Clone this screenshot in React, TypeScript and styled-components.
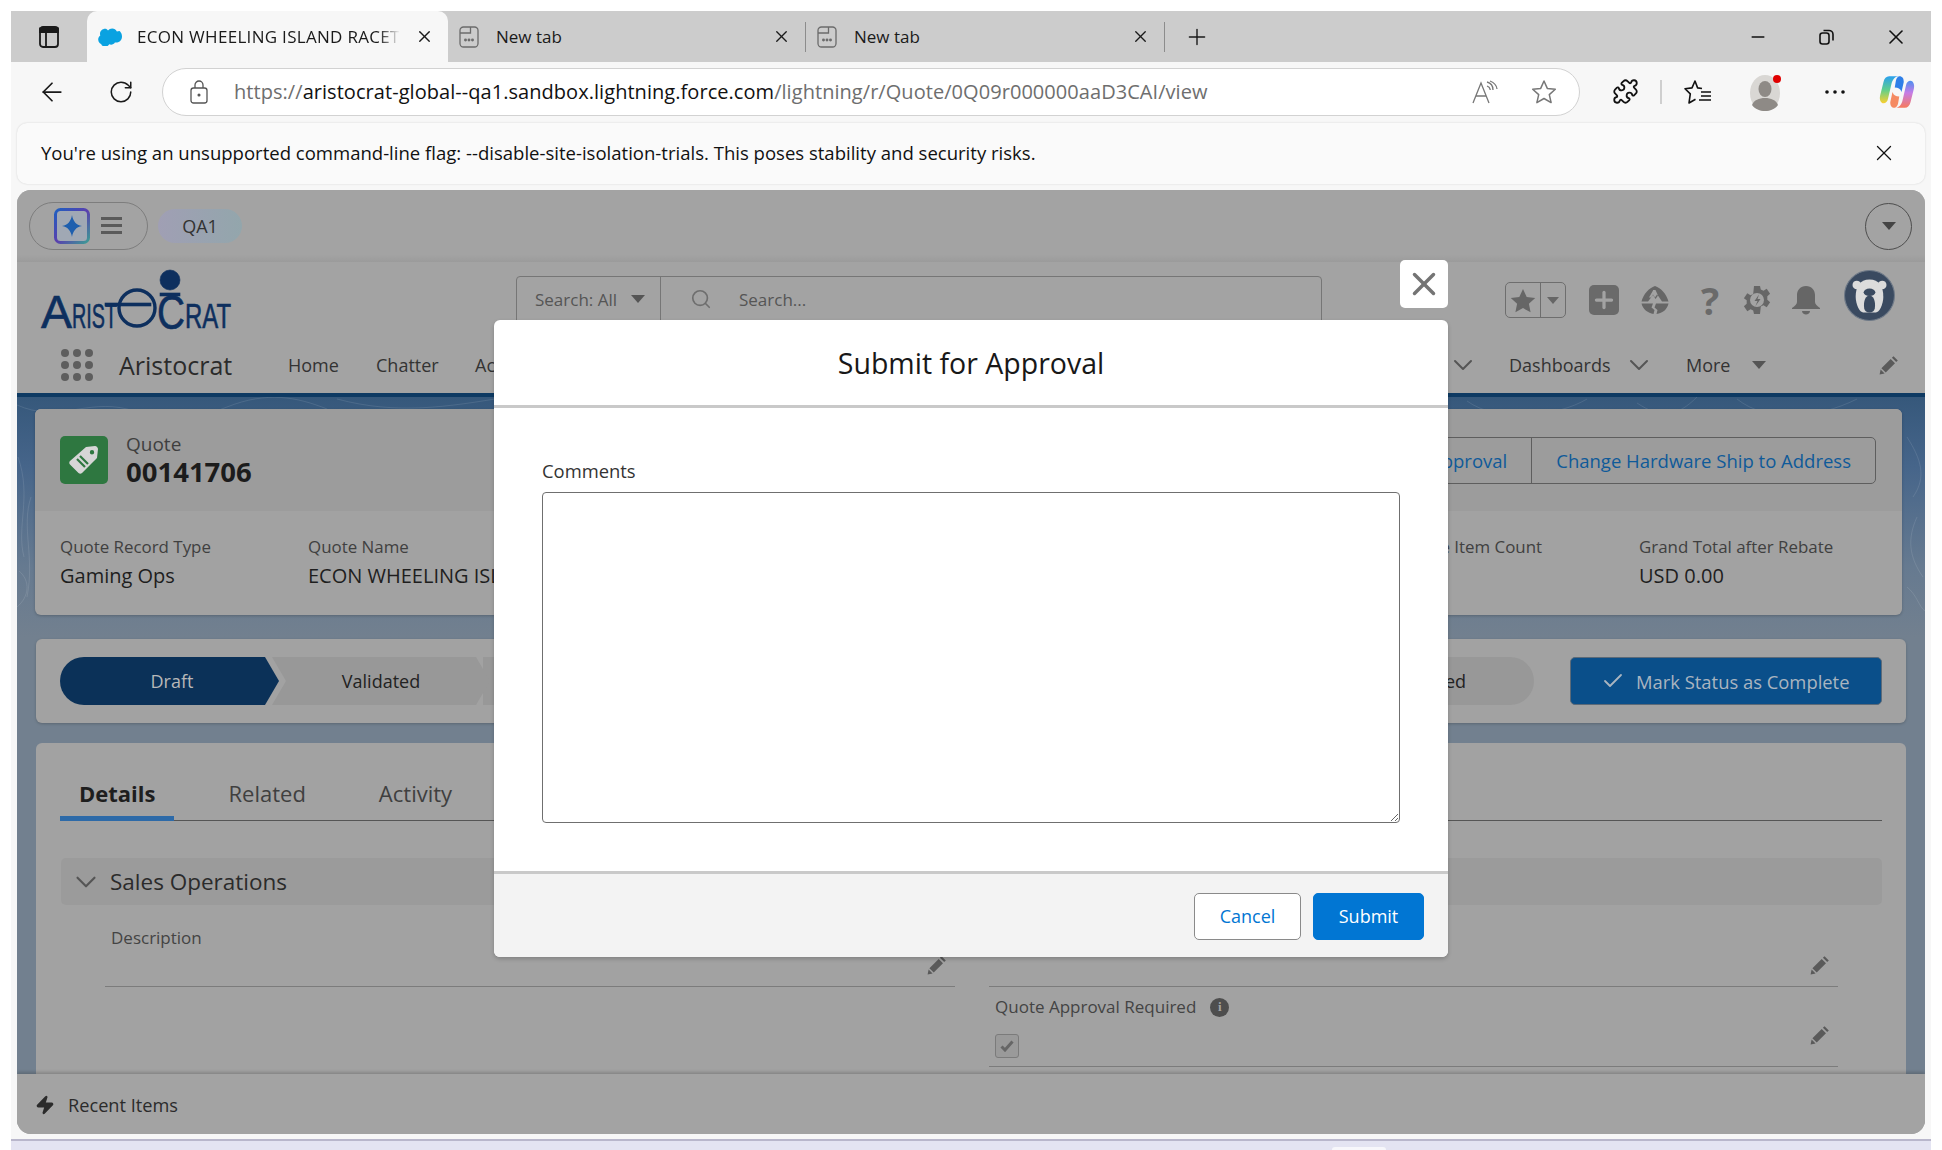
import React from 'react';
import styled, { createGlobalStyle } from 'styled-components';
import { X, Plus, ArrowLeft, RotateCw, Minus, Search, ChevronDown, Check, Zap, Puzzle } from 'lucide-react';

const Global = createGlobalStyle`
  html, body { margin: 0; padding: 0; background: #fff; }
  body { font-family: 'Open Sans', 'Noto Sans', sans-serif; width: 1942px; height: 1150px; overflow: hidden; }
  * { box-sizing: border-box; }
`;

const Screen = styled.div`
  width: 1942px;
  height: 1150px;
  padding: 11px 11px 0;
  display: flex;
  flex-direction: column;
  background: #fff;
`;
const BrowserWindow = styled.div`
  height: 1128px;
  background: #f7f7f7;
  display: flex;
  flex-direction: column;
`;
const TabStrip = styled.div`
  height: 51px;
  background: #cccccc;
  display: flex;
  align-items: center;
  flex-shrink: 0;
`;
const SideIcon = styled.div`
  width: 76px;
  display: flex;
  justify-content: center;
`;
const ActiveTab = styled.div`
  width: 361px;
  height: 51px;
  background: #f7f7f7;
  border-radius: 10px 10px 0 0;
  display: flex;
  align-items: center;
  padding: 0 14px 0 11px;
  gap: 15px;
  flex-shrink: 0;
`;
const TabTitle = styled.span`
  flex: 1;
  font-size: 17px;
  letter-spacing: 0.3px;
  color: #1a1a1a;
  white-space: nowrap;
  overflow: hidden;
  -webkit-mask-image: linear-gradient(90deg, #000 92%, transparent 100%);
  mask-image: linear-gradient(90deg, #000 92%, transparent 100%);
`;
const InactiveTab = styled.div<{ $w: number }>`
  width: ${(p) => p.$w}px;
  height: 51px;
  display: flex;
  align-items: center;
  gap: 17px;
  padding: 0 14px 0 11px;
  flex-shrink: 0;
  font-size: 17px;
  color: #1a1a1a;
`;
const TabLabel = styled.span`
  flex: 1;
`;
const TabDivider = styled.div`
  width: 1px;
  height: 30px;
  background: #8c8c8c;
  flex-shrink: 0;
`;
const NewTabButton = styled.div`
  width: 63px;
  display: flex;
  justify-content: center;
`;
const WindowControls = styled.div`
  margin-left: auto;
  display: flex;
  align-items: center;
  padding-right: 1px;
`;
const WindowControl = styled.div`
  width: 69px;
  display: flex;
  justify-content: center;
`;
const Toolbar = styled.div`
  height: 60px;
  flex-shrink: 0;
  display: flex;
  align-items: center;
  padding-bottom: 1px;
`;
const ToolButton = styled.div<{ $w: number; $ml?: number }>`
  width: ${(p) => p.$w}px;
  margin-left: ${(p) => p.$ml ?? 0}px;
  display: flex;
  justify-content: center;
  align-items: center;
  flex-shrink: 0;
`;
const AddressBar = styled.div`
  width: 1418px;
  height: 48px;
  background: #fff;
  border: 1.5px solid #d2d2d2;
  border-radius: 24px;
  display: flex;
  align-items: center;
  padding: 0 6px 0 26px;
  flex-shrink: 0;
`;
const Url = styled.div`
  margin-left: 25px;
  font-size: 20px;
  letter-spacing: 0.05px;
  color: #6e6e6e;
  white-space: nowrap;
  flex: 1;
`;
const UrlHost = styled.span`
  color: #111;
`;
const ToolSeparator = styled.div`
  width: 1.5px;
  height: 24px;
  background: #cfcfcf;
  flex-shrink: 0;
`;
const InfoBar = styled.div`
  height: 61px;
  margin: 1px 6px 0;
  background: #fafafa;
  border-radius: 10px;
  box-shadow: 0 0 2px rgba(0, 0, 0, 0.16);
  display: flex;
  align-items: center;
  justify-content: space-between;
  padding: 0 28px 2px 24px;
  font-size: 18.55px;
  color: #111;
  flex-shrink: 0;
`;
const Page = styled.div`
  position: relative;
  height: 944px;
  margin: 6px 6px 0;
  border-radius: 14px;
  overflow: hidden;
  background: #a3a3a3;
  display: flex;
  flex-direction: column;
  flex-shrink: 0;
`;
const TopBand = styled.div`
  height: 72px;
  flex-shrink: 0;
  display: flex;
  align-items: center;
  padding: 0 13px 0 12px;
  background: linear-gradient(#a3a3a3 90%, #9b9b9b 100%);
`;
const AssistPill = styled.div`
  width: 119px;
  height: 48px;
  border: 1px solid #7d7d7d;
  border-radius: 24px;
  display: flex;
  align-items: center;
  padding-left: 24px;
  gap: 11px;
`;
const EnvBadge = styled.div`
  width: 84px;
  height: 34px;
  margin-left: 10px;
  border-radius: 17px;
  background: linear-gradient(90deg, #a09fb4, #93a6ac);
  display: flex;
  align-items: center;
  justify-content: center;
  font-size: 18px;
  color: #333;
`;
const RoundToggle = styled.div`
  margin-left: auto;
  width: 47px;
  height: 47px;
  border: 1px solid #4d4d4d;
  border-radius: 50%;
  display: flex;
  align-items: center;
  justify-content: center;
`;
const Caret = styled.div<{ $s?: number; $c?: string }>`
  width: 0;
  height: 0;
  flex-shrink: 0;
  border-left: ${(p) => p.$s ?? 8}px solid transparent;
  border-right: ${(p) => p.$s ?? 8}px solid transparent;
  border-top: ${(p) => (p.$s ?? 8) + 1}px solid ${(p) => p.$c ?? '#555'};
`;
const HeaderTop = styled.div`
  height: 78px;
  flex-shrink: 0;
  display: flex;
  padding: 8px 30px 0 24px;
  align-items: flex-start;
`;
const LogoBox = styled.div`
  width: 192px;
  height: 62px;
  flex-shrink: 0;
`;
const SearchBox = styled.div`
  margin: 6px 0 0 283px;
  width: 806px;
  height: 52px;
  border: 1px solid #767676;
  border-radius: 4px;
  display: flex;
  flex-shrink: 0;
`;
const SearchScope = styled.div`
  width: 144px;
  border-right: 1px solid #767676;
  display: flex;
  align-items: center;
  padding: 0 15px 6px 18px;
  justify-content: space-between;
  font-size: 17px;
  color: #555;
`;
const SearchField = styled.div`
  flex: 1;
  display: flex;
  align-items: center;
  padding: 0 0 6px 29px;
  gap: 27px;
  font-size: 17px;
  color: #555;
`;
const HeaderActions = styled.div`
  margin-left: auto;
  display: flex;
  align-items: center;
  height: 54px;
  margin-top: 3px;
`;
const FavGroup = styled.div`
  width: 61px;
  height: 36px;
  border: 1px solid #6e6e6e;
  border-radius: 5px;
  display: flex;
  align-items: stretch;
`;
const FavStar = styled.div`
  width: 35px;
  display: flex;
  align-items: center;
  justify-content: center;
  border-right: 1px solid #6e6e6e;
`;
const FavCaret = styled.div`
  flex: 1;
  display: flex;
  align-items: center;
  justify-content: center;
`;
const ActionSlot = styled.div<{ $w: number }>`
  width: ${(p) => p.$w}px;
  display: flex;
  justify-content: center;
  align-items: center;
`;
const AddBox = styled.div`
  width: 30px;
  height: 30px;
  border-radius: 5px;
  background: #6a6a6a;
  display: flex;
  align-items: center;
  justify-content: center;
`;
const HelpMark = styled.span`
  font-size: 38px;
  font-weight: 700;
  color: #6a6a6a;
  line-height: 1;
`;
const Avatar = styled.div`
  width: 51px;
  height: 51px;
  margin: -9px 0 0 -6px;
  flex-shrink: 0;
`;
const NavRow = styled.div`
  height: 53px;
  flex-shrink: 0;
  display: flex;
  align-items: center;
  padding: 0 26px 3px 44px;
`;
const Waffle = styled.div`
  width: 32px;
  height: 32px;
  display: grid;
  grid-template-columns: repeat(3, 8px);
  grid-template-rows: repeat(3, 8px);
  justify-content: space-between;
  align-content: space-between;
`;
const WaffleDot = styled.span`
  border-radius: 50%;
  background: #5e5e5e;
`;
const AppName = styled.div`
  margin-left: 26px;
  width: 169px;
  font-size: 25px;
  color: #2b2b2b;
`;
const NavItem = styled.div<{ $w: number }>`
  width: ${(p) => p.$w}px;
  font-size: 18px;
  color: #333;
  flex-shrink: 0;
`;
const NavRight = styled.div`
  margin-left: auto;
  display: flex;
  align-items: center;
`;
const NavChevron = styled.div<{ $mr: number }>`
  margin-right: ${(p) => p.$mr}px;
  display: flex;
`;
const NavEdit = styled.div`
  margin-left: 113px;
  display: flex;
`;
const BlueRule = styled.div`
  height: 4px;
  background: #0e3a63;
  flex-shrink: 0;
`;
const Content = styled.div`
  position: relative;
  height: 677px;
  flex-shrink: 0;
  overflow: hidden;
  padding: 12px 19px 0 18px;
  background: linear-gradient(#36587b 0, #46658a 70px, #667a90 170px, #72808f 240px);
  display: flex;
  flex-direction: column;
`;
const Contours = styled.svg`
  position: absolute;
  left: 0;
  top: 0;
  width: 1908px;
  height: 260px;
`;
const Highlights = styled.section`
  position: relative;
  height: 206px;
  margin-right: 4px;
  flex-shrink: 0;
  border-radius: 6px;
  overflow: hidden;
  background: #a2a2a2;
  box-shadow: 0 1px 3px rgba(0, 0, 0, 0.2);
`;
const HighlightsTop = styled.div`
  height: 102px;
  background: #9c9c9c;
  display: flex;
  align-items: center;
  padding: 0 26px 0 25px;
`;
const RecordIcon = styled.div`
  width: 48px;
  height: 48px;
  border-radius: 5px;
  background: #2e7740;
  display: flex;
  align-items: center;
  justify-content: center;
  flex-shrink: 0;
`;
const RecordTitle = styled.div`
  margin: 2px 0 0 18px;
`;
const RecordKind = styled.div`
  font-size: 19px;
  line-height: 22px;
  color: #3f3f3f;
`;
const RecordName = styled.div`
  font-size: 27.5px;
  line-height: 34px;
  font-weight: 700;
  color: #1c1c1c;
`;
const ActionGroup = styled.div`
  margin-left: auto;
  height: 47px;
  border: 1px solid #5e5e5e;
  border-radius: 5px;
  display: flex;
  margin-top: 1px;
`;
const GroupButton = styled.div<{ $divider?: boolean }>`
  padding: 0 24px;
  display: flex;
  align-items: center;
  font-size: 18.5px;
  color: #0f5a99;
  border-left: ${(p) => (p.$divider ? '1px solid #5e5e5e' : 'none')};
`;
const FieldRow = styled.div`
  display: flex;
  padding: 24px 0 0 25px;
`;
const HighlightField = styled.div<{ $w?: number }>`
  width: ${(p) => (p.$w ? `${p.$w}px` : 'auto')};
  flex-shrink: 0;
  white-space: nowrap;
`;
const FieldsRight = styled.div`
  margin-left: auto;
  display: flex;
  padding-right: 49px;
`;
const FieldLabel = styled.div`
  font-size: 16.9px;
  line-height: 24px;
  color: #404040;
`;
const FieldValue = styled.div`
  font-size: 20px;
  line-height: 28px;
  margin-top: 3px;
  color: #1e1e1e;
`;
const PathCard = styled.section`
  position: relative;
  margin-top: 24px;
  margin-left: 1px;
  height: 84px;
  flex-shrink: 0;
  background: #a2a2a2;
  border-radius: 6px;
  box-shadow: 0 1px 3px rgba(0, 0, 0, 0.2);
  display: flex;
  align-items: center;
  padding: 0 24px;
`;
const StageDraft = styled.div`
  width: 219px;
  height: 48px;
  background: #0b3158;
  clip-path: path('M24 0 H205 L219 24 L205 48 H24 A24 24 0 0 1 24 0 Z');
  display: flex;
  align-items: center;
  justify-content: center;
  padding-left: 5px;
  font-size: 18px;
  color: #b8b8b8;
  flex-shrink: 0;
`;
const Stage = styled.div`
  width: 218px;
  height: 48px;
  margin-left: -7px;
  background: #989898;
  clip-path: path('M0 0 H204 L218 24 L204 48 H0 L14 24 Z');
  display: flex;
  align-items: center;
  justify-content: center;
  font-size: 18px;
  color: #222;
  flex-shrink: 0;
`;
const StageLast = styled.div`
  flex: 1;
  height: 48px;
  margin-left: -7px;
  background: #989898;
  border-radius: 0 24px 24px 0;
  display: flex;
  align-items: center;
  justify-content: flex-end;
  padding-right: 68px;
  font-size: 18px;
  color: #222;
`;
const CompleteButton = styled.div`
  margin-left: 36px;
  width: 312px;
  height: 48px;
  background: #0a4f8a;
  border: 1px solid #5c6a78;
  border-radius: 5px;
  display: flex;
  align-items: center;
  padding-left: 30px;
  gap: 11px;
  font-size: 18.4px;
  color: #aab5c0;
  flex-shrink: 0;
`;
const DetailsCard = styled.section`
  position: relative;
  margin-top: 20px;
  margin-left: 1px;
  flex: 1;
  background: #a2a2a2;
  border-radius: 6px 6px 0 0;
  padding: 25px 24px 0;
`;
const Tabs = styled.div`
  height: 53px;
  display: flex;
  gap: 35px;
  border-bottom: 1px solid #555;
`;
const TabItem = styled.div<{ $active?: boolean }>`
  padding: 9px 19px 0;
  height: 53px;
  font-size: 22px;
  line-height: 32px;
  font-weight: ${(p) => (p.$active ? 700 : 400)};
  color: ${(p) => (p.$active ? '#1e1e1e' : '#3f3f3f')};
  border-bottom: ${(p) => (p.$active ? '5px solid #2d6aa8' : '0')};
`;
const SectionHeader = styled.div`
  margin-top: 37px;
  height: 47px;
  margin-left: 1px;
  background: #9b9b9b;
  border-radius: 5px;
  display: flex;
  align-items: center;
  padding-left: 8px;
  gap: 7px;
  font-size: 22.5px;
  color: #2b2b2b;
`;
const FieldGrid = styled.div`
  display: grid;
  grid-template-columns: 850px 849px;
  column-gap: 34px;
  padding-left: 45px;
`;
const DetailField = styled.div<{ $h: number; $pt: number }>`
  height: ${(p) => p.$h}px;
  padding: ${(p) => p.$pt}px 8px 0 6px;
  border-bottom: 1px solid #7c7c7c;
  display: flex;
  justify-content: space-between;
`;
const DetailBody = styled.div`
  min-width: 0;
`;
const DetailLabel = styled.div`
  font-size: 17px;
  line-height: 24px;
  color: #444;
  display: flex;
  align-items: center;
  gap: 14px;
`;
const InfoDot = styled.span`
  width: 19px;
  height: 19px;
  border-radius: 50%;
  background: #4e4e4e;
  color: #a3a3a3;
  font-size: 13px;
  font-weight: 700;
  font-family: 'Liberation Serif', serif;
  display: flex;
  align-items: center;
  justify-content: center;
`;
const CheckBox = styled.div`
  width: 24px;
  height: 24px;
  margin-top: 15px;
  border: 1px solid #7b7b7b;
  border-radius: 3px;
  background: #9a9a9a;
  display: flex;
  align-items: center;
  justify-content: center;
`;
const PencilSlot = styled.div<{ $mt: number }>`
  margin-top: ${(p) => p.$mt}px;
  height: 20px;
  flex-shrink: 0;
`;
const UtilityBar = styled.div`
  height: 60px;
  flex-shrink: 0;
  background: #a3a3a3;
  box-shadow: 0 -2px 3px rgba(0, 0, 0, 0.18);
  position: relative;
  display: flex;
  align-items: center;
  padding: 1px 0 0 18px;
  gap: 13px;
  font-size: 18.2px;
  color: #2b2b2b;
`;
const ModalWrap = styled.div`
  position: absolute;
  left: 477px;
  top: 130px;
  width: 954px;
  height: 637px;
`;
const ModalClose = styled.div`
  position: absolute;
  right: 0;
  top: -60px;
  width: 48px;
  height: 48px;
  background: #fff;
  border-radius: 5px;
  display: flex;
  align-items: center;
  justify-content: center;
`;
const Modal = styled.div`
  height: 100%;
  background: #fff;
  border-radius: 6px;
  overflow: hidden;
  box-shadow: 0 2px 4px rgba(0, 0, 0, 0.2);
  display: flex;
  flex-direction: column;
`;
const ModalHeader = styled.div`
  height: 88px;
  flex-shrink: 0;
  border-bottom: 3px solid #c9c9c9;
  display: flex;
  align-items: center;
  justify-content: center;
  font-size: 28.5px;
  color: #181818;
`;
const ModalBody = styled.div`
  flex: 1;
  padding: 52px 48px 0;
`;
const CommentLabel = styled.label`
  display: block;
  font-size: 18.4px;
  line-height: 22px;
  color: #333;
  margin-bottom: 10px;
`;
const CommentBox = styled.textarea`
  display: block;
  width: 858px;
  height: 331px;
  border: 1px solid #6f6f6f;
  border-radius: 4px;
  background: #fff;
  outline: none;
  resize: vertical;
`;
const ModalFooter = styled.div`
  height: 86px;
  flex-shrink: 0;
  background: #f3f3f3;
  border-top: 3px solid #c9c9c9;
  display: flex;
  align-items: center;
  justify-content: flex-end;
  padding: 1px 24px 0 0;
  gap: 12px;
`;
const ModalButton = styled.button<{ $brand?: boolean }>`
  height: 47px;
  width: ${(p) => (p.$brand ? 111 : 107)}px;
  border-radius: 5px;
  border: 1px solid ${(p) => (p.$brand ? '#0176d3' : '#8a8a8a')};
  background: ${(p) => (p.$brand ? '#0176d3' : '#fff')};
  color: ${(p) => (p.$brand ? '#fff' : '#0176d3')};
  font-family: inherit;
  font-size: 18px;
`;
const BottomStrip = styled.div`
  height: 11px;
  background: #e4e4f2;
  border-top: 2px solid #b9b7cc;
  flex-shrink: 0;
  display: flex;
`;
const TaskbarTab = styled.div`
  width: 54px;
  height: 4px;
  margin: 6px 0 0 1321px;
  background: #f7f7fb;
  border-radius: 3px 3px 0 0;
`;

const Logo = () => (
  <svg width="192" height="72" viewBox="0 0 192 72" style={{ overflow: 'visible' }}>
    <g fill="#0d2f5e" stroke="#0d2f5e" strokeWidth="0.6" fontFamily="'Liberation Sans', sans-serif">
      <circle cx="129" cy="10" r="10" />
      <rect x="119" y="23" width="20" height="3" />
      <text x="0" y="58" fontSize="46" textLength="31" lengthAdjust="spacingAndGlyphs">A</text>
      <text x="31" y="58" fontSize="35" textLength="45" lengthAdjust="spacingAndGlyphs">RIST</text>
      <rect x="64" y="33" width="46" height="3" />
      <circle cx="96" cy="38" r="18" fill="none" stroke="#0d2f5e" strokeWidth="3.4" />
      <text x="116" y="59" fontSize="48" textLength="28" lengthAdjust="spacingAndGlyphs">C</text>
      <text x="144" y="58" fontSize="35" textLength="46" lengthAdjust="spacingAndGlyphs">RAT</text>
    </g>
  </svg>
);

const Pencil = () => (
  <svg width="20" height="20" viewBox="0 0 20 20">
    <path d="M14.5 1.2l4.3 4.3-1.6 1.6-4.3-4.3zM11.7 4l4.3 4.3-9.3 9.3-4.3-4.3zM1.6 14.4l4 4-5 1z" fill="#5a5a5a" />
  </svg>
);

const NewTabIcon = () => (
  <svg width="20" height="22" viewBox="0 0 20 22" fill="none" stroke="#6b6b6b" strokeWidth="1.3">
    <rect x="1" y="1" width="18" height="20" rx="3.5" />
    <path d="M1 7h10.5V1" />
    <circle cx="6.5" cy="14" r=".8" fill="#6b6b6b" />
    <circle cx="10" cy="14" r=".8" fill="#6b6b6b" />
    <circle cx="13.5" cy="14" r=".8" fill="#6b6b6b" />
  </svg>
);

const Contour = () => (
  <Contours viewBox="0 0 1908 260" fill="none" stroke="rgba(255,255,255,.1)" strokeWidth="1">
    <path d="M0 8c40 18 70-6 110 4s60 14 100-2 70-10 100 2M320 2c60 16 110 8 170-2M520 6c50 20 90-6 130 6s60 6 90-10" />
    <path d="M1 60c14 40-2 70 6 100M14 100c-10 30 4 60-4 100M0 210c12-10 14-26 2-36" />
    <path d="M1130 4c20 20 40 10 50-4M1240 2c16 24 60 22 90 2M1450 4c30 22 90 16 120-2M1620 6c24 16 40 14 60-6M1720 2c30 24 80 20 120 0" />
    <path d="M1890 40c14 22 20 40 6 60M1900 120c-10 22-8 40 6 60M1890 190c10 8 12 20 18 24" />
  </Contours>
);

export default function App() {
  return (
    <Screen>
      <Global />
      <BrowserWindow>
        <TabStrip>
          <SideIcon>
            <svg width="20" height="22" viewBox="0 0 20 22" fill="none" stroke="#1a1a1a" strokeWidth="1.8">
              <rect x="1" y="1" width="18" height="20" rx="3" />
              <path d="M1 2.5h18v3.5H1z" fill="#1a1a1a" />
              <path d="M7 6v15" />
            </svg>
          </SideIcon>
          <ActiveTab>
            <svg width="24" height="18" viewBox="0 0 24 18">
              <path d="M10 2.6C11 1.3 12.5.6 14.2.6c2 0 3.8 1.1 4.7 2.8.8-.3 1.6-.5 2.4-.5 0 0 2.7 1.2 2.7 5.6s-3.3 6.1-5.9 6.1c-.4 0-.8 0-1.2-.1-.8 1.3-2.2 2.2-3.8 2.2-.7 0-1.3-.2-1.9-.4-.8 1.4-2.3 2.4-4 2.4-1.9 0-3.4-1.1-4.1-2.7C1.9 15.7.2 13.8.2 11.5c0-1.6.8-3 2.1-3.9-.2-.6-.3-1.1-.3-1.7C2 3 4.4.8 7.2.8c1.1 0 2 .6 2.8 1.8z" fill="#0aa2e1" />
            </svg>
            <TabTitle>ECON WHEELING ISLAND RACETRACK</TabTitle>
            <X size={19} strokeWidth={1.7} color="#1a1a1a" />
          </ActiveTab>
          <InactiveTab $w={357}>
            <NewTabIcon />
            <TabLabel>New tab</TabLabel>
            <X size={19} strokeWidth={1.7} color="#1a1a1a" />
          </InactiveTab>
          <TabDivider />
          <InactiveTab $w={358}>
            <NewTabIcon />
            <TabLabel>New tab</TabLabel>
            <X size={19} strokeWidth={1.7} color="#1a1a1a" />
          </InactiveTab>
          <TabDivider />
          <NewTabButton>
            <Plus size={26} strokeWidth={1.3} color="#1a1a1a" />
          </NewTabButton>
          <WindowControls>
            <WindowControl><Minus size={20} strokeWidth={1.8} color="#111" /></WindowControl>
            <WindowControl>
              <svg width="15" height="16" viewBox="0 0 15 16" fill="none" stroke="#111" strokeWidth="1.6">
                <rect x="1" y="4" width="9" height="11" rx="2.5" />
                <path d="M4.5 1.5h5.5a4 4 0 0 1 4 4v6" />
              </svg>
            </WindowControl>
            <WindowControl><X size={24} strokeWidth={1.6} color="#111" /></WindowControl>
          </WindowControls>
        </TabStrip>
        <Toolbar>
          <ToolButton $w={82}><ArrowLeft size={30} strokeWidth={1.4} color="#1a1a1a" /></ToolButton>
          <ToolButton $w={55}><RotateCw size={26} strokeWidth={1.4} color="#1a1a1a" /></ToolButton>
          <ToolButton $w={14} />
          <AddressBar>
            <svg width="20" height="24" viewBox="0 0 20 24" fill="none" stroke="#555" strokeWidth="1.3">
              <rect x="2" y="8" width="16" height="15" rx="2.5" />
              <path d="M6 8V5a4 4 0 0 1 8 0v3" />
              <circle cx="10" cy="15" r=".9" fill="#555" />
            </svg>
            <Url>
              https://<UrlHost>aristocrat-global--qa1.sandbox.lightning.force.com</UrlHost>/lightning/r/Quote/0Q09r000000aaD3CAI/view
            </Url>
            <ToolButton $w={60}>
              <svg width="26" height="24" viewBox="0 0 26 24" fill="none" stroke="#777" strokeWidth="1.3">
                <path d="M1 23L9 3l8 20M4 16h10" />
                <path d="M15 2c4 1 6 4 6 8M15 6c2 .6 3 2 3.3 4M18 1c4 1.5 6.5 4 7 8" />
              </svg>
            </ToolButton>
            <ToolButton $w={58}>
              <svg width="26" height="26" viewBox="0 0 26 26" fill="none" stroke="#777" strokeWidth="1.5" strokeLinejoin="round">
                <path d="M13 2l3.3 7.4 8 .8-6 5.4 1.8 8-7.1-4.1-7.1 4.1 1.8-8-6-5.4 8-.8z" />
              </svg>
            </ToolButton>
          </AddressBar>
          <ToolButton $w={70} $ml={10}><Puzzle size={27} strokeWidth={1.6} color="#111" /></ToolButton>
          <ToolSeparator />
          <ToolButton $w={72}>
            <svg width="28" height="26" viewBox="0 0 28 26" fill="none" stroke="#111" strokeWidth="1.6" strokeLinejoin="round">
              <path d="M18 9.5l-4.4-.6L11 2 8 8.900l-7 .8 5.300 5.200L5 24l6.500-3.800" />
              <path d="M17 13h10M17 17h10M15 21h12" />
            </svg>
          </ToolButton>
          <ToolButton $w={66}>
            <svg width="36" height="40" viewBox="0 0 36 40">
              <ellipse cx="16" cy="21" rx="15" ry="18" fill="#d9d7d4" />
              <ellipse cx="16" cy="17" rx="6.5" ry="8" fill="#8e8a86" />
              <path d="M3 33c2-5 7-7 13-7s11 2 13 7c-3 4-8 6-13 6s-10-2-13-6z" fill="#8e8a86" />
              <circle cx="28" cy="7" r="4" fill="#e00000" />
            </svg>
          </ToolButton>
          <ToolButton $w={70}>
            <svg width="22" height="6" viewBox="0 0 22 6" fill="#111">
              <circle cx="3" cy="3" r="1.8" /><circle cx="11" cy="3" r="1.8" /><circle cx="19" cy="3" r="1.8" />
            </svg>
          </ToolButton>
          <ToolButton $w={55}>
            <svg width="36" height="36" viewBox="0 0 32 32">
              <defs>
                <linearGradient id="cpA" x1="0" y1="0" x2="0" y2="1">
                  <stop offset="0" stopColor="#2aa0ef" /><stop offset=".5" stopColor="#5fcf8c" /><stop offset="1" stopColor="#fbd02f" />
                </linearGradient>
                <linearGradient id="cpB" x1="0" y1="0" x2="0" y2="1">
                  <stop offset="0" stopColor="#4c8ff0" /><stop offset=".45" stopColor="#c67ce6" /><stop offset="1" stopColor="#f77a5c" />
                </linearGradient>
              </defs>
              <path d="M9 2h9c-4 0-6 3-7 7l-3 13c-.5 2.5-2 4-4 4C2 26 0 23 1 19l3-12c.7-3 2.5-5 5-5z" fill="url(#cpA)" />
              <path d="M23 30h-9c4 0 6-3 7-7l3-13c.5-2.5 2-4 4-4 2 0 4 3 3 7l-3 12c-.7 3-2.5 5-5 5z" fill="url(#cpB)" />
              <path d="M18 2c3 0 4 2 4 5l-2 9c-1-3-3-4-6-4l1-6c.5-2 1.5-4 3-4z" fill="#2f7fe8" />
              <path d="M14 30c-3 0-4-2-4-5l2-9c1 3 3 4 6 4l-1 6c-.5 2-1.5 4-3 4z" fill="#f58a62" />
            </svg>
          </ToolButton>
        </Toolbar>
        <InfoBar>
          <span>You're using an unsupported command-line flag: --disable-site-isolation-trials. This poses stability and security risks.</span>
          <X size={26} strokeWidth={1.2} color="#111" />
        </InfoBar>
        <Page>
          <TopBand>
            <AssistPill>
              <svg width="36" height="36" viewBox="0 0 36 36">
                <defs>
                  <linearGradient id="asB" x1="0" y1="0" x2="1" y2="1">
                    <stop offset="0" stopColor="#1f5fc0" /><stop offset=".5" stopColor="#5a3fae" /><stop offset="1" stopColor="#3d9a95" />
                  </linearGradient>
                </defs>
                <rect x="1.5" y="1.5" width="33" height="33" rx="5" fill="#a0a8b4" stroke="url(#asB)" strokeWidth="3" />
                <path d="M18 7c1 6 4 10 10 11-6 1-9 5-10 11-1-6-4-10-10-11 6-1 9-5 10-11z" fill="#1e5fae" />
              </svg>
              <svg width="21" height="18" viewBox="0 0 21 18" fill="#5a5a5a">
                <rect width="21" height="3" /><rect y="7" width="21" height="3" /><rect y="14" width="21" height="3" />
              </svg>
            </AssistPill>
            <EnvBadge>QA1</EnvBadge>
            <RoundToggle><Caret $s={7} $c="#444" /></RoundToggle>
          </TopBand>
          <HeaderTop>
            <LogoBox><Logo /></LogoBox>
            <SearchBox>
              <SearchScope>Search: All<Caret $s={7} $c="#555" /></SearchScope>
              <SearchField><Search size={22} strokeWidth={1.8} color="#6e6e6e" />Search...</SearchField>
            </SearchBox>
            <HeaderActions>
              <FavGroup>
                <FavStar>
                  <svg width="26" height="25" viewBox="0 0 26 25" fill="#666"><path d="M13 1l3.7 7.9 8.5 1-6.3 5.9 1.7 8.5L13 20.1 5.400 24.300l1.700-8.500L.8 9.900l8.500-1z" /></svg>
                </FavStar>
                <FavCaret><Caret $s={6} $c="#666" /></FavCaret>
              </FavGroup>
              <ActionSlot $w={76}><AddBox><Plus size={26} strokeWidth={3} color="#a3a3a3" /></AddBox></ActionSlot>
              <ActionSlot $w={26}>
                <svg width="30" height="30" viewBox="0 0 30 30" fill="#666" style={{ flexShrink: 0 }}>
                  <path fillRule="evenodd" d="M15 1c6 2 11.500 8 13.500 15.500H22l-4-6-2.500 3.500L13 10l-5 6.500H1.500C3.500 9 9 3 15 1zM13 5.500l-4 7h2l2-3 2 3 2-3 1.500 2-3-6.500h-2.500z" />
                  <path d="M1.500 18.500H13l-1.500 4 3 2.500-1 4C8 28 3 24.500 1.500 18.500zM16 18.500h12.500C27 24.500 23 28 16.500 29l1-4-3-2.500z" />
                </svg>
              </ActionSlot>
              <ActionSlot $w={84}><HelpMark>?</HelpMark></ActionSlot>
              <ActionSlot $w={10}>
                <svg width="28" height="30" viewBox="0 0 28 30" fill="#666" style={{ flexShrink: 0 }}>
                  <path fillRule="evenodd" d="M11 1h6l.8 3.600 2.700 1.100 3.200-1.900 3.400 5-2.800 2.500v3.400l2.800 2.500-3.400 5-3.200-1.900-2.700 1.100L17 29h-6l-.8-3.600-2.700-1.100-3.200 1.900-3.400-5 2.800-2.500v-3.400L.9 13.300l3.400-5 3.200 1.900 2.700-1.100zM14 8a7 7 0 1 0 0 14 7 7 0 0 0 0-14zm2 1.500l-4.500 6.500h3l-2 5 5-7h-3z" />
                </svg>
              </ActionSlot>
              <ActionSlot $w={88}>
                <svg width="28" height="30" viewBox="0 0 28 30" fill="#666" style={{ flexShrink: 0 }}>
                  <path d="M14 1c5.500 0 9 4 9 9v7c0 2 2 4 5 6v1H0v-1c3-2 5-4 5-6v-7c0-5 3.500-9 9-9zM10 26h8c0 2-2 3.500-4 3.500S10 28 10 26z" />
                </svg>
              </ActionSlot>
              <Avatar>
                <svg width="51" height="51" viewBox="0 0 48 48">
                  <circle cx="24" cy="24" r="23.5" fill="#3a4a60" stroke="#6f7a88" strokeWidth="1" />
                  <circle cx="12" cy="14" r="4" fill="#dcdcdc" />
                  <circle cx="36" cy="14" r="4" fill="#dcdcdc" />
                  <path d="M24 9c9 0 13 7 13 16 0 8-4 15-7 15h-12c-3 0-7-7-7-15 0-9 4-16 13-16z" fill="#dcdcdc" />
                  <path d="M24 24c3.500 0 6 5 5 12-.5 3-2.500 4-5 4s-4.500-1-5-4c-1-7 1.500-12 5-12z" fill="#3a4a60" />
                  <ellipse cx="24" cy="21" rx="5.500" ry="3.500" fill="#3a4a60" />
                </svg>
              </Avatar>
            </HeaderActions>
          </HeaderTop>
          <NavRow>
            <Waffle>
              {Array.from({ length: 9 }).map((_, i) => <WaffleDot key={i} />)}
            </Waffle>
            <AppName>Aristocrat</AppName>
            <NavItem $w={88}>Home</NavItem>
            <NavItem $w={99}>Chatter</NavItem>
            <NavItem $w={80}>Accounts</NavItem>
            <NavRight>
              <NavChevron $mr={30}><ChevronDown size={32} strokeWidth={1.5} color="#555" /></NavChevron>
              <NavItem $w={114}>Dashboards</NavItem>
              <NavChevron $mr={31}><ChevronDown size={32} strokeWidth={1.5} color="#555" /></NavChevron>
              <NavItem $w={66}>More</NavItem>
              <Caret $s={7} $c="#555" />
              <NavEdit><Pencil /></NavEdit>
            </NavRight>
          </NavRow>
          <BlueRule />
          <Content>
            <Contour />
            <Highlights>
              <HighlightsTop>
                <RecordIcon>
                  <svg width="32" height="32" viewBox="0 0 32 32" fill="#d6d6d6">
                    <path fillRule="evenodd" d="M18 3l9-1c1.500 0 3 1.500 3 3l-1 9-15 15c-1 1-2.500 1-3.500 0L2 20.500c-1-1-1-2.500 0-3.500zm6 3a2.200 2.200 0 1 0 0 4.400A2.200 2.200 0 0 0 24 6z" />
                    <path d="M9 15l8 8M12 12l8 8" stroke="#2e7740" strokeWidth="2.2" />
                  </svg>
                </RecordIcon>
                <RecordTitle>
                  <RecordKind>Quote</RecordKind>
                  <RecordName>00141706</RecordName>
                </RecordTitle>
                <ActionGroup>
                  <GroupButton>Submit for Approval</GroupButton>
                  <GroupButton $divider>Change Hardware Ship to Address</GroupButton>
                </ActionGroup>
              </HighlightsTop>
              <FieldRow>
                <HighlightField $w={248}>
                  <FieldLabel>Quote Record Type</FieldLabel>
                  <FieldValue>Gaming Ops</FieldValue>
                </HighlightField>
                <HighlightField $w={400}>
                  <FieldLabel>Quote Name</FieldLabel>
                  <FieldValue>ECON WHEELING ISLAND RACETRACK</FieldValue>
                </HighlightField>
                <FieldsRight>
                  <HighlightField $w={222}>
                    <FieldLabel>Line Item Count</FieldLabel>
                  </HighlightField>
                  <HighlightField $w={214}>
                    <FieldLabel>Grand Total after Rebate</FieldLabel>
                    <FieldValue>USD 0.00</FieldValue>
                  </HighlightField>
                </FieldsRight>
              </FieldRow>
            </Highlights>
            <PathCard>
              <StageDraft>Draft</StageDraft>
              <Stage>Validated</Stage>
              <StageLast>Approved</StageLast>
              <CompleteButton>
                <Check size={24} strokeWidth={1.8} color="#aab5c0" />
                Mark Status as Complete
              </CompleteButton>
            </PathCard>
            <DetailsCard>
              <Tabs>
                <TabItem $active>Details</TabItem>
                <TabItem>Related</TabItem>
                <TabItem>Activity</TabItem>
              </Tabs>
              <SectionHeader>
                <ChevronDown size={34} strokeWidth={1.5} color="#555" />
                Sales Operations
              </SectionHeader>
              <FieldGrid>
                <DetailField $h={82} $pt={21}>
                  <DetailBody><DetailLabel>Description</DetailLabel></DetailBody>
                  <PencilSlot $mt={29}><Pencil /></PencilSlot>
                </DetailField>
                <DetailField $h={82} $pt={21}>
                  <DetailBody />
                  <PencilSlot $mt={29}><Pencil /></PencilSlot>
                </DetailField>
                <div />
                <DetailField $h={80} $pt={8}>
                  <DetailBody>
                    <DetailLabel>Quote Approval Required<InfoDot>i</InfoDot></DetailLabel>
                    <CheckBox>
                      <svg width="14" height="12" viewBox="0 0 14 12" fill="none" stroke="#666" strokeWidth="3"><path d="M1.5 6.5l3.500 3.500 7.500-8.500" /></svg>
                    </CheckBox>
                  </DetailBody>
                  <PencilSlot $mt={30}><Pencil /></PencilSlot>
                </DetailField>
              </FieldGrid>
            </DetailsCard>
          </Content>
          <UtilityBar>
            <Zap size={20} fill="#2b2b2b" color="#2b2b2b" />
            Recent Items
          </UtilityBar>
          <ModalWrap>
            <ModalClose><X size={38} strokeWidth={2.2} color="#747474" /></ModalClose>
            <Modal>
              <ModalHeader>Submit for Approval</ModalHeader>
              <ModalBody>
                <CommentLabel>Comments</CommentLabel>
                <CommentBox />
              </ModalBody>
              <ModalFooter>
                <ModalButton>Cancel</ModalButton>
                <ModalButton $brand>Submit</ModalButton>
              </ModalFooter>
            </Modal>
          </ModalWrap>
        </Page>
      </BrowserWindow>
      <BottomStrip><TaskbarTab /></BottomStrip>
    </Screen>
  );
}
